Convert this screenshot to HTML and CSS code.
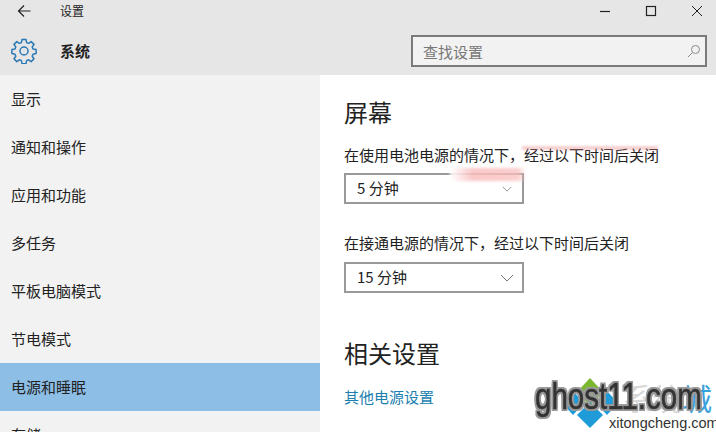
FILE: index.html
```html
<!DOCTYPE html>
<html lang="zh-CN">
<head>
  <meta charset="UTF-8" />
  <title>设置</title>
  <link rel="stylesheet" href="styles.css">
</head>
<body>
  <header class="top">
    <div class="titlebar">
      <svg class="back" width="14" height="14" viewBox="0 0 14 14"><path d="M13.500 7H1.500M7 1.500 1.500 7 7 12.500" fill="none" stroke="#222" stroke-width="1.200"/></svg>
      <span class="title">设置</span>
      <div class="winbtns">
        <svg width="12" height="12" viewBox="0 0 12 12"><path d="M1 6.500h10" stroke="#222" stroke-width="1.200"/></svg>
        <svg width="12" height="12" viewBox="0 0 12 12"><rect x="1.500" y="1.500" width="9" height="9" fill="none" stroke="#222" stroke-width="1.200"/></svg>
        <svg width="12" height="12" viewBox="0 0 12 12"><path d="M1 1l10 10M11 1 1 11" stroke="#222" stroke-width="1"/></svg>
      </div>
    </div>
    <div class="headrow">
      <svg class="gear" width="26" height="26" viewBox="0 0 26 26">
        <circle cx="13" cy="13" r="4" fill="none" stroke="#2b79b5" stroke-width="1.500"/>
        <path d="M11 1.500h4l.6 3.100 2 .8 2.600-1.800 2.800 2.800-1.800 2.600.8 2 3.100.6v4l-3.100.6-.8 2 1.800 2.600-2.800 2.800-2.600-1.800-2 .8-.6 3.100h-4l-.6-3.100-2-.8-2.600 1.800-2.800-2.800 1.800-2.600-.8-2-3.100-.6v-4l3.100-.6.8-2-1.800-2.600 2.800-2.800 2.600 1.800 2-.8z" fill="none" stroke="#2b79b5" stroke-width="1.500" stroke-linejoin="round"/>
      </svg>
      <strong class="section">系统</strong>
      <div class="search">
        <span>查找设置</span>
        <svg width="14" height="14" viewBox="0 0 14 14"><circle cx="8.500" cy="5.500" r="4" fill="none" stroke="#8a8a8a" stroke-width="1"/><path d="M5.500 8.500 1 13" stroke="#8a8a8a" stroke-width="1"/></svg>
      </div>
    </div>
  </header>

  <div class="main">
    <nav class="side">
      <div class="item">显示</div>
      <div class="item">通知和操作</div>
      <div class="item">应用和功能</div>
      <div class="item">多任务</div>
      <div class="item">平板电脑模式</div>
      <div class="item">节电模式</div>
      <div class="item active">电源和睡眠</div>
      <div class="item">存储</div>
    </nav>

    <section class="content">
      <h2>屏幕</h2>
      <label>在使用电池电源的情况下，经过以下时间后关闭</label>
      <div class="select"><span>5 分钟</span><svg class="faint" width="10" height="6" viewBox="0 0 14 8"><path d="M1 1l6 6 6-6" fill="none" stroke="#999" stroke-width="1.400"/></svg></div>
      <label class="second">在接通电源的情况下，经过以下时间后关闭</label>
      <div class="select"><span>15 分钟</span><svg width="14" height="8" viewBox="0 0 14 8"><path d="M1 1l6 6 6-6" fill="none" stroke="#777" stroke-width="1"/></svg></div>
      <h2 class="related">相关设置</h2>
      <a class="link">其他电源设置</a>
    </section>
  </div>

  <!-- leftovers from an erased mark -->
  <div class="smudge"></div>
  <div class="smudge specks"></div>

  <!-- watermark over the corner -->
  <div class="mark">
    <svg class="diamond" width="56" height="50" viewBox="0 0 56 50">
      <path d="M27 0 40 14 27 28 14 14z" fill="#7cb82f"/>
      <path d="M10 13 21 25 10 37-1 25z" fill="#1e9bd8"/>
      <path d="M44 13 55 25 44 37 33 25z" fill="#1e9bd8"/>
      <path d="M27 24 40 37 27 50 14 37z" fill="#1e9bd8"/>
    </svg>
    <span class="cn">系统<i>城</i></span>
    <span class="ghost">ghost11.com</span>
    <span class="xi">xitongcheng.com</span>
  </div>
</body>
</html>
```

FILE: styles.css
```css
html, body {
  margin: 0;
  height: 432px;
  overflow: hidden;
}
body {
  font-family: "Noto Sans CJK SC", "Liberation Sans", sans-serif;
  font-size: 15px;
  background: #fff;
  color: #222;
  position: relative;
}
.top {
  background: #e6e6e6;
  height: 75px;
}
.titlebar {
  display: flex;
  align-items: center;
  height: 21px;
  padding-left: 17px;
}
.title {
  font-size: 12px;
  margin-left: 29px;
}
.winbtns {
  margin-left: auto;
  display: flex;
  gap: 34px;
  padding-right: 13px;
}
.headrow {
  display: flex;
  align-items: center;
  height: 48px;
  padding: 6px 9px 0 11px;
}
.section {
  margin-left: 23px;
  font-size: 15px;
  padding-bottom: 2px;
}
.search {
  margin-left: auto;
  width: 278px;
  height: 28px;
  border: 2px solid #7a7a7a;
  background: #f2f2f2;
  display: flex;
  align-items: center;
  justify-content: space-between;
  padding: 0 4px 0 10px;
  color: #777;
}
.main {
  display: flex;
  height: 357px;
}
.side {
  width: 320px;
  height: 357px;
  overflow: hidden;
  background: #f2f2f2;
  flex: none;
}
.item {
  height: 48px;
  line-height: 48px;
  padding-left: 11px;
}
.item.active {
  background: #8dbee6;
}
.content {
  padding: 21px 0 0 24px;
}
h2 {
  margin: 0;
  font-size: 24px;
  font-weight: 400;
  line-height: 32px;
}
label {
  display: block;
  line-height: 22px;
  margin-top: 16px;
}
label.second {
  margin-top: 28px;
}
.select {
  box-sizing: border-box;
  width: 180px;
  height: 31px;
  margin-top: 7px;
  border: 2px solid #999;
  display: flex;
  align-items: center;
  justify-content: space-between;
  padding: 0 8px 0 11px;
  background: #fff;
}
.select span {
  padding-bottom: 2px;
}
.select .faint {
  margin-right: 2px;
}
label.second + .select {
  margin-top: 8px;
}
.related {
  margin-top: 44px;
}
.link {
  display: block;
  margin-top: 17px;
  color: #1b7fb0;
  line-height: 22px;
}
.smudge {
  position: absolute;
  left: 450px;
  top: 168px;
  width: 76px;
  height: 13px;
  background: linear-gradient(90deg, rgba(255,255,255,.9), rgba(250,190,190,.85) 30%, rgba(250,190,190,.75) 90%, rgba(255,255,255,0));
  filter: blur(1.500px);
}
.smudge.specks {
  left: 522px;
  top: 146px;
  width: 136px;
  height: 4px;
  background: rgba(235,150,150,.45);
  filter: blur(1px);
}
.mark {
  position: absolute;
  left: 530px;
  top: 375px;
  width: 186px;
  height: 57px;
}
.diamond {
  position: absolute;
  left: 33px;
  top: 3px;
}
.cn {
  position: absolute;
  left: 92px;
  top: 5px;
  font-size: 30px;
  line-height: 34px;
  color: #d8d8d8;
}
.cn i {
  font-style: normal;
  color: #3aa0dc;
}
.ghost {
  position: absolute;
  left: 5px;
  top: 0;
  font-family: "Liberation Sans", sans-serif;
  font-size: 36px;
  line-height: 44px;
  color: #333;
  -webkit-text-stroke: 0.5px #333;
  transform: scaleX(.82);
  transform-origin: left top;
  text-shadow: 2px 0 0 #999, -2px 0 0 #999, 0 2px 0 #999, 0 -2px 0 #999, 2px 2px 0 #999, -2px -2px 0 #999, 2px -2px 0 #999, -2px 2px 0 #999;
}
.xi {
  position: absolute;
  left: 79px;
  top: 39px;
  font-family: "Liberation Sans", sans-serif;
  font-size: 14.500px;
  line-height: 18px;
  color: #333;
}
```
